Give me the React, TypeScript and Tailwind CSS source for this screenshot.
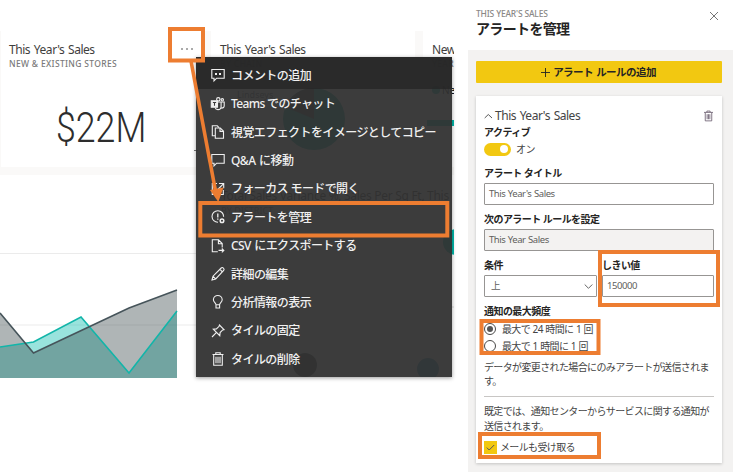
import React from "react";

const UI = "font-['Noto_Sans','Noto_Sans_CJK_JP',sans-serif]";

function Icon({ children, className = "" }: { children: React.ReactNode; className?: string }) {
  return (
    <svg
      viewBox="0 0 14 14"
      className={`h-[14px] w-[14px] shrink-0 overflow-visible ${className}`}
      fill="none"
      stroke="currentColor"
      strokeWidth="1.1"
    >
      {children}
    </svg>
  );
}

const icons = {
  comment: (
    <Icon>
      <path d="M.8 1.5h12.4v8.7H5.6L3 12.8v-2.6H.8z" />
      <path d="M4 5h2v2H4zM8 5h2v2H8z" fill="currentColor" stroke="none" />
    </Icon>
  ),
  teams: (
    <Icon>
      <path d="M.3 3.8h6.2v6.4H.3z" fill="currentColor" />
      <path d="M1.9 5.5h3.2M3.5 5.5v3.2" stroke="#3c3c3c" />
      <circle cx="7.3" cy="2.3" r="1.7" />
      <circle cx="11.3" cy="2.8" r="1.2" />
      <path d="M6.5 5h3.6v4.4c0 2-1.3 3.2-3.2 3.2-1.5 0-2.4-.7-2.8-2M10.2 5h3v3.7c0 1.6-1 2.5-2.8 2.4" />
    </Icon>
  ),
  copy: (
    <Icon>
      <path d="M4.3 3h5l3.2 3.2v7H4.3z" />
      <path d="M9 3v3.4h3.5M4 10.7H1.3V.8h5L8 2.6" />
    </Icon>
  ),
  chat: (
    <Icon>
      <path d="M.8 1.5h12.4v8.7H5.6L3 12.8v-2.6H.8z" />
    </Icon>
  ),
  focus: (
    <Icon>
      <path d="M6 1.5H1.3v11h11V8M8 1.5h4.7v4.7M12.4 1.8 6.2 8" />
    </Icon>
  ),
  alert: (
    <Icon>
      <path d="M7 12.3A5.8 5.8 0 1 1 12.6 6.7" />
      <path d="M6.8 3.4v4.2M6.8 8.6v1.2" strokeWidth="1.3" />
      <circle cx="11" cy="10.8" r="1.8" strokeWidth="1.5" />
    </Icon>
  ),
  csv: (
    <Icon>
      <path d="M6.8 12.8H1.3V.8h6.2l3.7 3.7v4M7.4.8v3.9h3.8M7.5 11.4h5M10.8 9.5l2 1.9-2 1.9" />
    </Icon>
  ),
  pencil: (
    <Icon>
      <path d="M1 13l1-3.8L10.2 1c.7-.7 1.5-.5 2.2.2.9.8.9 1.6.3 2.3L4.7 12zM9 2.4 11.5 5M2.1 9.4 4.6 12" />
    </Icon>
  ),
  bulb: (
    <Icon>
      <path d="M5 9.7C4.8 8 2.4 7 2.4 4.7A4.4 4.4 0 0 1 6.8.5a4.4 4.4 0 0 1 4.4 4.2c0 2.3-2.4 3.3-2.6 5zM5 9.7v3.3h3.6V9.7" />
    </Icon>
  ),
  pin: (
    <Icon>
      <path d="M8.4 1 13 5.6l-1.3.3-2.6 2.7-.3 3.1-6.5-6.5 3.1-.3L8.1 2.3zM5.3 8.7 1 13" />
    </Icon>
  ),
  trash: (
    <Icon>
      <path d="M1.5 2.5h11M4.8 2.3V.7h4.4v1.6M2.7 2.6v10.7h8.6V2.6" />
      <path d="M5 4.8v6.4M7 4.8v6.4M9 4.8v6.4" />
    </Icon>
  ),
};

const menuItems: { icon: React.ReactNode; label: string; spacing: string }[] = [
  { icon: icons.comment, label: "コメントの追加", spacing: "tracking-[-0.55px]" },
  { icon: icons.teams, label: "Teams でのチャット", spacing: "tracking-[-0.65px]" },
  { icon: icons.copy, label: "視覚エフェクトをイメージとしてコピー", spacing: "tracking-[-0.58px]" },
  { icon: icons.chat, label: "Q&A に移動", spacing: "tracking-[-0.55px] [word-spacing:1px]" },
  { icon: icons.focus, label: "フォーカス モードで開く", spacing: "tracking-[-0.6px]" },
  { icon: icons.alert, label: "アラートを管理", spacing: "tracking-[-0.55px]" },
  { icon: icons.csv, label: "CSV にエクスポートする", spacing: "tracking-[-0.6px] [word-spacing:1px]" },
  { icon: icons.pencil, label: "詳細の編集", spacing: "tracking-[-0.55px]" },
  { icon: icons.bulb, label: "分析情報の表示", spacing: "tracking-[-0.55px]" },
  { icon: icons.pin, label: "タイルの固定", spacing: "tracking-[-0.55px]" },
  { icon: icons.trash, label: "タイルの削除", spacing: "tracking-[-0.55px]" },
];

function TileHead({ title, sub }: { title: string; sub: string }) {
  return (
    <div className="whitespace-nowrap pl-[9px] pt-[11px]">
      <div className="h-[15px] text-[12px] leading-[15px] tracking-[-0.45px] text-[#3f3e3d] [word-spacing:1px]">{title}</div>
      <div className="h-[12px] pt-px text-[8.5px] font-medium leading-[12px] tracking-[0.33px] text-[#7a7a7a]">{sub}</div>
    </div>
  );
}

function AreaChart() {
  return (
    <svg width="196" height="203" viewBox="0 175 196 203" className="block shrink-0">
      <path d="M0 253.5h196M0 325h196" stroke="#ebebeb" />
      <path d="M0 347 33.5 342 81 317 129 373 177 311V378H0z" fill="#01b8aa" fillOpacity=".4" />
      <path d="M0 313 33.5 353 129 308 177 290V378H0z" fill="#374649" fillOpacity=".4" />
      <path d="M0 347 33.5 342 81 317 129 373 177 311" fill="none" stroke="#12b5a9" strokeWidth="1.6" />
      <path d="M0 313 33.5 353 129 308 177 290" fill="none" stroke="#46545a" strokeWidth="1.6" />
    </svg>
  );
}

function Dashboard() {
  return (
    <div className="flex h-[472px] w-[454px] shrink-0 flex-col overflow-hidden bg-white pt-[31px]">
      <div className="flex h-[136px] shrink-0">
        <section className="flex w-[202px] shrink-0 flex-col border-l border-[#faf9f8]">
          <div className="flex justify-between">
            <div className="-ml-px">
              <TileHead title="This Year's Sales" sub="NEW & EXISTING STORES" />
            </div>
            <div className="flex gap-[3px] pr-[9px] pt-[17px]">
              <i className="h-[2px] w-[2px] bg-[#aaa]" />
              <i className="h-[2px] w-[2px] bg-[#aaa]" />
              <i className="h-[2px] w-[2px] bg-[#aaa]" />
            </div>
          </div>
          <div className="flex pl-[55px] pt-[34px]">
            <div className="origin-left scale-x-[0.83] whitespace-nowrap font-['Roboto',sans-serif] text-[43px] font-light leading-[48px] text-[#2d2d2d]">
              $22M
            </div>
          </div>
          <div className="-mt-[1px] ml-auto mr-[4px] h-px w-[4px] bg-[#777]" />
        </section>
        <div className="w-[9px] shrink-0 bg-[#faf9f8]" />
        <section className="w-[204px] shrink-0">
          <TileHead title="This Year's Sales" sub="BY CHAIN" />
          <div className="flex pt-[18px]">
            <span className="w-[71px] pl-[26px] pt-[2px] text-[9px] leading-[12px] text-gray-600">Lindseys</span>
            <svg width="64" height="64" viewBox="0 0 64 64">
              <circle cx="32" cy="32" r="31" fill="#02a89b" />
              <path d="M32 32V1a31 31 0 0 0-29 19z" fill="#374649" />
            </svg>
          </div>
        </section>
        <div className="w-[8px] shrink-0 bg-[#faf9f8]" />
        <section className="w-[60px] shrink-0">
          <TileHead title="New Stores" sub="YEAR TO DATE" />
          <div className="flex h-[15px] items-center gap-[2px] pl-[9px] pt-px mt-[13px] text-[10px] leading-[12px]">
            <i className="h-[8px] w-[8px] rounded-full bg-[#01b8aa]" />
            New
          </div>
          <div className="ml-[4px] mt-[23px] h-[6px] bg-[#01b8aa]" />
        </section>
      </div>
      <div className="h-[8px] shrink-0 bg-[#faf9f8]" />
      <div className="flex h-[203px] shrink-0">
        <AreaChart />
        <div className="w-[258px] shrink-0 overflow-hidden">
          <div className="whitespace-nowrap pl-[25px] pt-[12px] text-[12px] leading-[18px] tracking-[-0.3px] text-[#333]">
            Total Sales Variance %, Sales Per Sq Ft, This
          </div>
          <div className="pl-[25px] text-[9px] leading-[12px] text-[#666]">BY DISTRICT</div>
          <svg width="258" height="160" viewBox="0 217 258 160" className="block">
            <path d="M30 307h228" stroke="#ddd" />
            <circle cx="260" cy="242" r="13" fill="#01b8aa" />
            <circle cx="109" cy="365" r="12" fill="#374649" />
            <circle cx="232" cy="369" r="11" fill="#3599b8" />
          </svg>
        </div>
      </div>
    </div>
  );
}

function ContextMenu() {
  return (
    <div className="absolute left-[196px] top-[57px] flex h-[320px] w-[256px] flex-col bg-[#323232]/95 text-[#f0f0f0] shadow-[0_1px_4px_rgba(0,0,0,0.4)]">
      {menuItems.map((m, i) => (
        <div
          key={m.label}
          className={
            i === 0
              ? "flex h-[32px] shrink-0 items-center gap-[6px] bg-[#252525]/80 pl-[15px] pt-[4px]"
              : "flex h-[28.4px] shrink-0 items-center gap-[6px] pl-[15px] pt-px"
          }
        >
          {m.icon}
          <span className={`whitespace-nowrap pt-px text-[12px] font-medium leading-[18px] ${m.spacing}`}>{m.label}</span>
        </div>
      ))}
    </div>
  );
}

function Label({ children }: { children: React.ReactNode }) {
  return (
    <div className="h-[14px] whitespace-nowrap text-[10px] font-semibold leading-[14px] tracking-[-0.55px] text-[#252423]">
      {children}
    </div>
  );
}

const FIELD =
  "flex h-[22px] items-center rounded-[1px] border border-[#979593] pl-[4px] pt-px text-[9.5px] tracking-[-0.45px] [word-spacing:0.5px] text-[#605e5c]";

function Radio({ checked, label }: { checked?: boolean; label: string }) {
  return (
    <div className="flex h-[16.5px] items-center gap-[6px]">
      <span className="flex h-[12px] w-[12px] shrink-0 items-center justify-center rounded-full border border-[#4a4948]">
        {checked && <span className="h-[6px] w-[6px] rounded-full bg-[#555]" />}
      </span>
      <span className="whitespace-nowrap text-[10px] leading-[14px] tracking-[-0.65px] text-[#444] [word-spacing:0.6px]">{label}</span>
    </div>
  );
}

function AlertPanel() {
  return (
    <aside className="flex h-[472px] w-[265px] shrink-0 flex-col">
      <header className="flex h-[50px] shrink-0 justify-between bg-white pl-[8px]">
        <div className="whitespace-nowrap pt-[7px]">
          <div className="h-[13px] text-[8.5px] font-medium leading-[13px] tracking-[-0.18px] text-[#8a8886]">THIS YEAR'S SALES</div>
          <h1 className="text-[14px] font-bold leading-[17px] tracking-[-0.65px] text-[#252423]">アラートを管理</h1>
        </div>
        <svg width="10" height="10" viewBox="0 0 10 10" className="mr-[14px] mt-[11px]" stroke="#666" strokeWidth=".9">
          <path d="m1 1 8 8M9 1 1 9" />
        </svg>
      </header>
      <div className="flex flex-1 flex-col bg-[#f3f2f1] pl-[8px] pr-[11px] pt-[11px]">
        <button className="flex h-[22px] shrink-0 items-center justify-center gap-[3px] rounded-[1px] bg-[#f2c811] pt-px text-[10.5px] font-semibold tracking-[-0.55px] text-[#252423] [word-spacing:1px]">
          <svg width="9" height="9" viewBox="0 0 9 9" stroke="currentColor" strokeWidth=".9">
            <path d="M0 4.5h9M4.5 0v9" />
          </svg>
          <span className="mr-px">アラート ルールの追加</span>
        </button>
        <div className="mt-[13px] flex h-[367px] shrink-0 flex-col bg-white px-[8px] pt-[11px] shadow-[0_1px_3px_rgba(0,0,0,0.2)]">
          <div className="flex h-[18px] shrink-0 items-center text-[#444]">
            <svg width="9" height="9" viewBox="0 0 9 9" fill="none" stroke="currentColor" strokeWidth=".9">
              <path d="m.7 6 3.6-3.5L8 6" />
            </svg>
            <span className="ml-[2px] whitespace-nowrap text-[12px] tracking-[-0.48px] [word-spacing:1px]">This Year's Sales</span>
            <svg viewBox="0 0 10 12" className="ml-auto mr-px h-[12px] w-[9px]" fill="none" stroke="#65586a">
              <path d="M0 2h10M3.2 1.8V.5h3.6v1.3M1.4 2.2v9.2h7.2V2.2M3.5 4v5.6M5 4v5.6M6.5 4v5.6" strokeWidth=".9" />
            </svg>
          </div>
          <Label>アクティブ</Label>
          <div className="mt-[3px] flex h-[14px] shrink-0 items-center">
            <span className="flex h-[13px] w-[27px] items-center justify-end rounded-full bg-[#f2c811] pr-[3px]">
              <span className="h-[8px] w-[8px] rounded-full bg-white" />
            </span>
            <span className="ml-[5px] text-[10px] tracking-[-0.6px] text-[#444]">オン</span>
          </div>
          <div className="mt-[10px] h-[17px] shrink-0">
            <Label>アラート タイトル</Label>
          </div>
          <div className={FIELD}>This Year's Sales</div>
          <div className="mt-[7px] h-[17px] shrink-0">
            <Label>次のアラート ルールを設定</Label>
          </div>
          <div className={`${FIELD} bg-[#f3f2f1]`}>This Year Sales</div>
          <div className="mt-[7px] flex shrink-0 gap-[5px]">
            <div className="w-[113px]">
              <div className="h-[17px]">
                <Label>条件</Label>
              </div>
              <div className={`${FIELD} justify-between pr-[3px]`}>
                <span className="pl-[2px]">上</span>
                <svg width="9" height="9" viewBox="0 0 9 9" fill="none" stroke="#555" strokeWidth=".9">
                  <path d="m.7 2.5 3.8 3.8 3.8-3.8" />
                </svg>
              </div>
            </div>
            <div className="w-[112px]">
              <div className="h-[17px]">
                <Label>しきい値</Label>
              </div>
              <div className={FIELD}>150000</div>
            </div>
          </div>
          <div className="mt-[7px] h-[17px] shrink-0">
            <Label>通知の最大頻度</Label>
          </div>
          <div className="h-[33px] shrink-0">
            <Radio checked label="最大で 24 時間に 1 回" />
            <Radio label="最大で 1 時間に 1 回" />
          </div>
          <p className="mt-[6px] h-[37px] shrink-0 whitespace-nowrap border-b border-[#c8c6c4] text-[10px] leading-[14px] tracking-[-0.63px] text-[#444]">
            データが変更された場合にのみアラートが送信されま
            <br />
            す。
          </p>
          <p className="mt-[7px] shrink-0 whitespace-nowrap text-[10px] leading-[14.5px] tracking-[-0.63px] text-[#444]">
            既定では、通知センターからサービスに関する通知が
            <br />
            送信されます。
          </p>
          <div className="mt-[8px] flex h-[13px] shrink-0 items-center gap-[3px]">
            <svg width="13" height="13" viewBox="0 0 13 13" className="bg-[#f2c811]" fill="none" stroke="#555">
              <path d="m2.8 6.6 2.4 2.4 5-5" />
            </svg>
            <span className="whitespace-nowrap text-[10px] leading-[13px] tracking-[-0.63px] text-[#444]">メールも受け取る</span>
          </div>
        </div>
      </div>
    </aside>
  );
}

function Highlights() {
  return (
    <svg width="733" height="472" className="pointer-events-none absolute left-0 top-0" fill="none" stroke="#ed7d31" strokeWidth="4">
      <rect x="170" y="29" width="33" height="31.5" />
      <rect x="200.3" y="203" width="247" height="32.5" />
      <rect x="600" y="252" width="118" height="53" />
      <rect x="481.5" y="321" width="117" height="32" />
      <rect x="480" y="434" width="119" height="23" />
      <path d="M191 61 215.5 191" strokeWidth="3.6" />
      <path d="m210 190 13.5-2.5L218.3 202z" fill="#ed7d31" stroke="none" />
    </svg>
  );
}

export default function App() {
  return (
    <div className={`relative flex h-[472px] w-[733px] overflow-hidden bg-white ${UI}`}>
      <Dashboard />
      <div className="w-[14px] shrink-0" />
      <AlertPanel />
      <ContextMenu />
      <Highlights />
    </div>
  );
}
